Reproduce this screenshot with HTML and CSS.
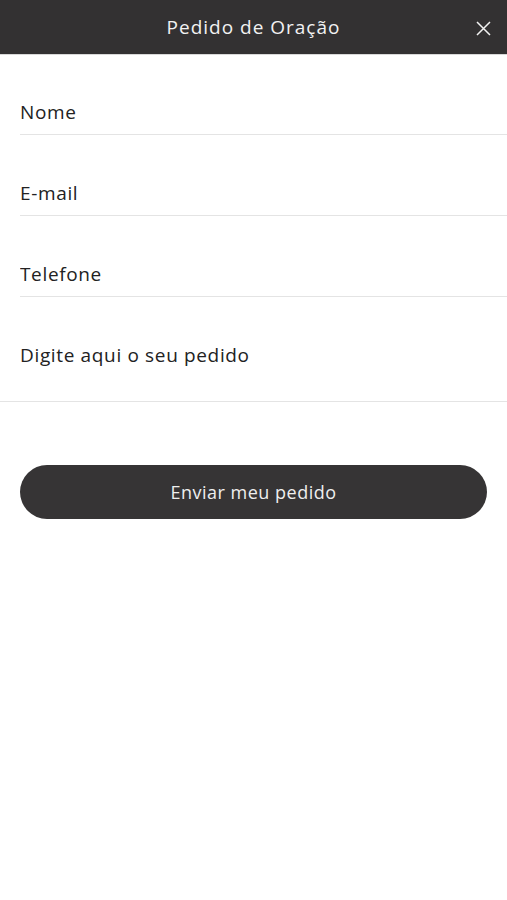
FILE: index.html
```html
<!DOCTYPE html>
<html>

<head>
    <title>Pedido de Oração</title>
    <link rel="stylesheet" href="styles.css">
</head>

<body>
    <div class="header">
        <h1>Pedido de Oração</h1>
        <button type="button" class="close-button" aria-label="Fechar">
            <svg width="15" height="15" viewBox="0 0 15 15">
                <path d="M1 1 L14 14 M14 1 L1 14" stroke="#f2f2f2" stroke-width="1.5" fill="none" />
            </svg>
        </button>
    </div>

    <form id="prayer-form">
        <div class="field">
            <input type="text" name="name" placeholder="Nome">
        </div>
        <div class="field">
            <input type="email" name="email" placeholder="E-mail">
        </div>
        <div class="field">
            <input type="text" name="phone" placeholder="Telefone">
        </div>
        <div class="field field-request">
            <textarea name="request" rows="1" placeholder="Digite aqui o seu pedido"></textarea>
        </div>
        <button type="button" class="submit-button">Enviar meu pedido</button>
    </form>
</body>

</html>
```

FILE: styles.css
```css
body {
    margin: 0;
    background-color: #fff;
    color: #222;
    font-family: 'Open Sans', 'Liberation Sans', sans-serif;
}

.header {
    position: relative;
    height: 54px;
    background-color: #333132;
    border-bottom: 1px solid #d8d8d8;
    display: flex;
    align-items: center;
    justify-content: center;
}

.header h1 {
    margin: 0;
    font-size: 19px;
    font-weight: 400;
    letter-spacing: 1px;
    color: #f2f2f2;
}

.close-button {
    position: absolute;
    right: 10px;
    top: 14px;
    width: 28px;
    height: 28px;
    padding: 0;
    border: none;
    background: none;
    display: flex;
    align-items: center;
    justify-content: center;
}

.field {
    margin-left: 20px;
    border-bottom: 1px solid #e4e4e4;
}

.field:first-child input {
    height: 79px;
    padding-top: 46px;
}

.field input,
.field textarea {
    display: block;
    width: 100%;
    box-sizing: border-box;
    border: none;
    outline: none;
    padding: 47px 0 11px;
    margin: 0;
    font-family: inherit;
    font-size: 19px;
    line-height: 22px;
    letter-spacing: 0.65px;
    height: 80px;
    color: #222;
    background: none;
    resize: none;
}

.field input::placeholder,
.field textarea::placeholder {
    color: #222;
    opacity: 1;
}

.field-request {
    margin-left: 0;
    padding-left: 20px;
}

.field-request textarea {
    height: 104px;
    padding-bottom: 35px;
    overflow: hidden;
}

.submit-button {
    display: block;
    width: calc(100% - 40px);
    height: 54px;
    margin: 63px 20px 0;
    border: none;
    border-radius: 27px;
    background-color: #363435;
    color: #eee;
    font-family: inherit;
    font-size: 18px;
    letter-spacing: 0.5px;
}
```
